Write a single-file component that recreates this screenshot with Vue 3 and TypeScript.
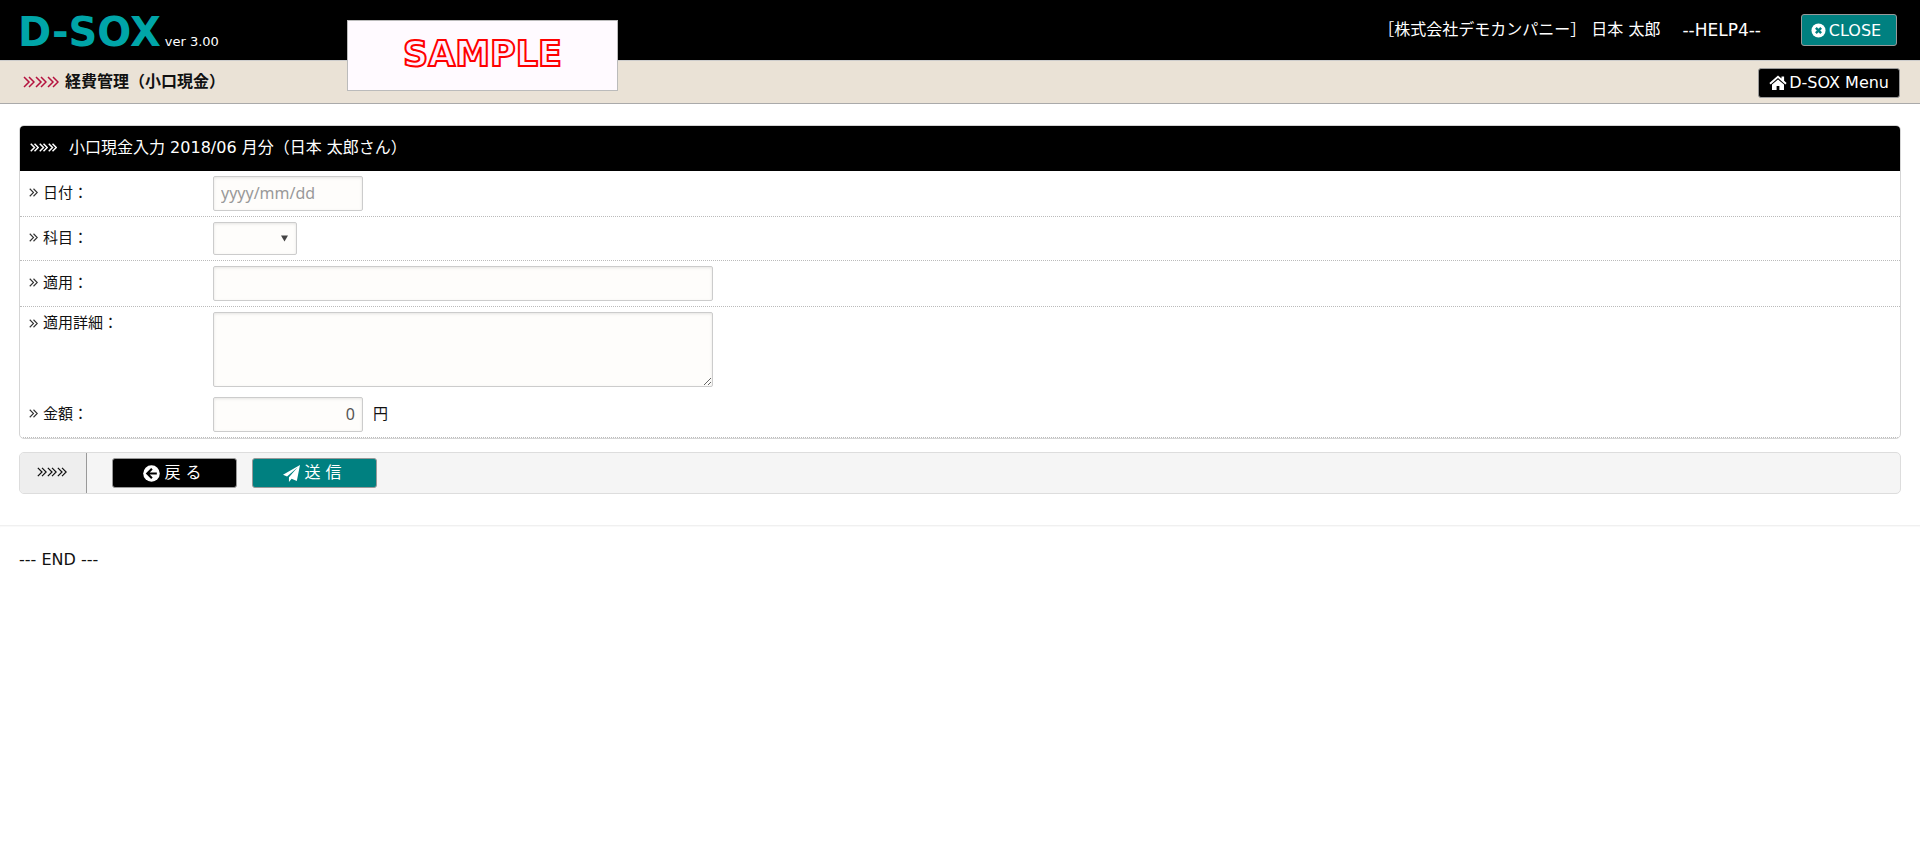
<script setup lang="ts">
import { ref } from 'vue'

const date = ref('')
const subject = ref('')
const summary = ref('')
const detail = ref('')
const amount = ref('0')
</script>

<template>
  <div class="page">
    <svg class="defs" aria-hidden="true">
      <symbol id="chevrons" viewBox="0 0 12 12">
        <path d="M1 1l5 5-5 5M6 1l5 5-5 5" fill="none" stroke="currentColor" />
      </symbol>
    </svg>

    <header class="topbar">
      <div class="brand">
        <span class="logo">D-SOX</span>
        <span class="version">ver 3.00</span>
      </div>
      <div class="account">
        <span>［株式会社デモカンパニー］</span>
        <span class="user">日本 太郎</span>
        <span class="help">--HELP4--</span>
        <button type="button" class="btn teal close">
          <svg width="15" height="15" viewBox="0 0 16 16">
            <circle cx="8" cy="8" r="7.5" fill="#fff" />
            <path d="M5.2 5.2l5.6 5.6M10.8 5.2l-5.6 5.6" stroke="#008080" stroke-width="2.6" />
          </svg>
          CLOSE
        </button>
      </div>
    </header>

    <div class="sample">SAMPLE</div>

    <div class="subbar">
      <h1>
        <span class="marks large"><svg v-for="n in 3" :key="n"><use href="#chevrons" /></svg></span>
        経費管理（小口現金）
      </h1>
      <button type="button" class="btn black menu">
        <svg width="18" height="16" viewBox="0 0 18 16">
          <path d="M9 .6L.4 8l1.2 1.4L9 3.1l7.4 6.3L17.6 8l-2.5-2.2V1.4h-2.6v2.2z" fill="#fff" />
          <path d="M9 4.4L3 9.5V15h4.6v-4h2.8v4H15V9.5z" fill="#fff" />
        </svg>
        D-SOX Menu
      </button>
    </div>

    <main>
      <form @submit.prevent>
        <section class="panel">
          <h2>
            <span class="marks bold"><svg v-for="n in 3" :key="n"><use href="#chevrons" /></svg></span>
            小口現金入力 2018/06 月分（日本 太郎さん）
          </h2>
          <div class="row">
            <label for="date"><svg class="mark"><use href="#chevrons" /></svg>日付：</label>
            <div class="field"><input id="date" v-model="date" class="short" type="text" placeholder="yyyy/mm/dd"></div>
          </div>
          <div class="row">
            <label for="subject"><svg class="mark"><use href="#chevrons" /></svg>科目：</label>
            <div class="field select">
              <select id="subject" v-model="subject"><option value=""></option></select>
              <svg class="arrow" width="7" height="7" viewBox="0 0 8 7"><path d="M0 0h8L4 7z" fill="#444" /></svg>
            </div>
          </div>
          <div class="row">
            <label for="summary"><svg class="mark"><use href="#chevrons" /></svg>適用：</label>
            <div class="field"><input id="summary" v-model="summary" class="long" type="text"></div>
          </div>
          <div class="row top">
            <label for="detail"><svg class="mark"><use href="#chevrons" /></svg>適用詳細：</label>
            <div class="field"><textarea id="detail" v-model="detail" class="long"></textarea></div>
          </div>
          <div class="row">
            <label for="amount"><svg class="mark"><use href="#chevrons" /></svg>金額：</label>
            <div class="field"><input id="amount" v-model="amount" class="short number" type="text"><span class="unit">円</span></div>
          </div>
        </section>

        <div class="actions">
          <div class="lead"><span class="marks"><svg v-for="n in 3" :key="n"><use href="#chevrons" /></svg></span></div>
          <button type="button" class="btn black wide">
            <svg width="17" height="17" viewBox="0 0 16 16">
              <circle cx="8" cy="8" r="7.8" fill="#fff" />
              <path d="M13 8H4.4M8.4 3.6L4 8l4.4 4.4" fill="none" stroke="#000" stroke-width="2" />
            </svg>
            戻 る
          </button>
          <button type="submit" class="btn teal wide">
            <svg width="17" height="17" viewBox="0 0 16 16">
              <path d="M16 0L0 9.2l3.8 1.6L13.6 2.4 5.6 11.6V16l2.5-3 4.9 2z" fill="#fff" />
            </svg>
            送 信
          </button>
        </div>
      </form>
    </main>

    <footer>--- END ---</footer>
  </div>
</template>

<style>
body {
  margin: 0;
  background: #fff;
}
</style>

<style scoped>
.page {
  position: relative;
  font: 16px/24px "DejaVu Sans", "Noto Sans CJK JP", sans-serif;
  color: #111;
}
.page * {
  box-sizing: border-box;
}
.defs {
  position: absolute;
  width: 0;
  height: 0;
}
svg {
  flex: none;
}
.topbar {
  display: flex;
  justify-content: space-between;
  align-items: center;
  height: 61px;
  padding: 0 23px 0 18px;
  border-bottom: 1px solid #ccc;
  background: #000;
  color: #fff;
}
.brand {
  display: flex;
  align-items: baseline;
  gap: 4px;
}
.logo {
  font: bold 40px/60px "DejaVu Sans", sans-serif;
  color: #00a5a8;
  padding-top: 4px;
}
.version {
  font-size: 13px;
}
.account {
  display: flex;
  align-items: center;
}
.user {
  margin-left: 5px;
}
.help {
  margin: 0 40px 0 22px;
  font-size: 17px;
}
.btn {
  display: flex;
  align-items: center;
  justify-content: center;
  gap: 3px;
  height: 30px;
  padding: 0 10px;
  border: 1px solid #999;
  border-radius: 3px;
  font: inherit;
  color: #fff;
  white-space: nowrap;
}
.teal {
  background: #008080;
}
.black {
  background: #000;
}
.close {
  width: 96px;
  height: 32px;
  padding: 1px 14px 0 8px;
}
.menu {
  height: 30px;
  padding: 0 10px;
  gap: 2px;
}
.wide {
  width: 125px;
  gap: 4px;
  padding-right: 14px;
}
.sample {
  position: absolute;
  top: 20px;
  left: 347px;
  width: 271px;
  height: 71px;
  border: 1px solid #bbb;
  background: #fffaff;
  font: bold 35px/66px "DejaVu Sans", sans-serif;
  text-align: center;
  color: #fdf0ff;
  -webkit-text-stroke: 2px #f00;
}
.subbar {
  display: flex;
  justify-content: space-between;
  align-items: center;
  height: 43px;
  padding: 2px 20px 0 23px;
  border-bottom: 1px solid #aaa;
  background: #eae2d6;
}
h1,
h2 {
  display: flex;
  align-items: center;
  margin: 0;
  font-size: 16px;
}
h1 {
  padding-bottom: 2px;
}
.marks {
  display: flex;
  stroke-width: 1.5px;
}
.marks svg {
  width: 10px;
  height: 12px;
}
.marks.large {
  margin-right: 6px;
  color: #b5123e;
}
.marks.large svg {
  width: 12px;
  height: 12px;
}
.marks.bold {
  margin-right: 12px;
  stroke-width: 2px;
}
.marks.bold svg {
  width: 9px;
  height: 11px;
}
main {
  padding: 21px 19px 0;
}
.panel {
  border: 1px solid #d5d5d5;
  border-radius: 5px;
  overflow: hidden;
}
h2 {
  height: 45px;
  padding: 0 10px 2px;
  background: #000;
  color: #fff;
  font-weight: normal;
}
.row {
  display: grid;
  grid-template-columns: 188px 1fr;
  align-items: center;
  padding: 5px 0;
  border-bottom: 1px dotted #bbb;
  font-size: 15px;
}
.row.top {
  align-items: start;
  border-bottom: 0;
}
.row.top label {
  line-height: 22px;
}
label {
  display: flex;
  align-items: center;
  gap: 5px;
  padding: 0 0 2px 9px;
}
.mark {
  width: 9px;
  height: 11px;
  color: #333;
  stroke-width: 1.5px;
}
.field {
  display: flex;
  align-items: center;
  gap: 10px;
  padding-left: 5px;
}
.unit {
  padding-bottom: 2px;
}
input,
select,
textarea {
  height: 35px;
  margin: 0;
  padding: 0 7px 2px;
  border: 1px solid #ccc;
  border-radius: 2px;
  background: #fefdfb;
  box-shadow: inset 0 1px 3px rgba(0, 0, 0, 0.1);
  font: 16px "Noto Sans", "Noto Sans CJK JP", sans-serif;
  color: #555;
}
input::placeholder {
  color: #999;
}
.short {
  width: 150px;
}
.number {
  text-align: right;
}
.long {
  width: 500px;
}
textarea {
  height: 75px;
}
select {
  width: 84px;
  height: 33px;
  appearance: none;
}
.select {
  position: relative;
}
.arrow {
  position: absolute;
  left: 73px;
  top: 13px;
  pointer-events: none;
}
.actions {
  display: flex;
  align-items: center;
  gap: 15px;
  height: 42px;
  margin-top: 13px;
  border: 1px solid #ddd;
  border-radius: 5px;
  background: #f5f5f5;
}
.lead {
  display: flex;
  align-items: center;
  justify-content: center;
  align-self: stretch;
  width: 67px;
  margin-right: 10px;
  padding: 0 2px 2px 0;
  border-right: 1px solid #999;
  background: #eee;
  border-radius: 4px 0 0 4px;
}
footer {
  margin-top: 31px;
  padding: 22px 19px;
  border-top: 1px solid #f0f0f0;
  box-shadow: inset 0 1px 1px #f9f9f9;
}
</style>
